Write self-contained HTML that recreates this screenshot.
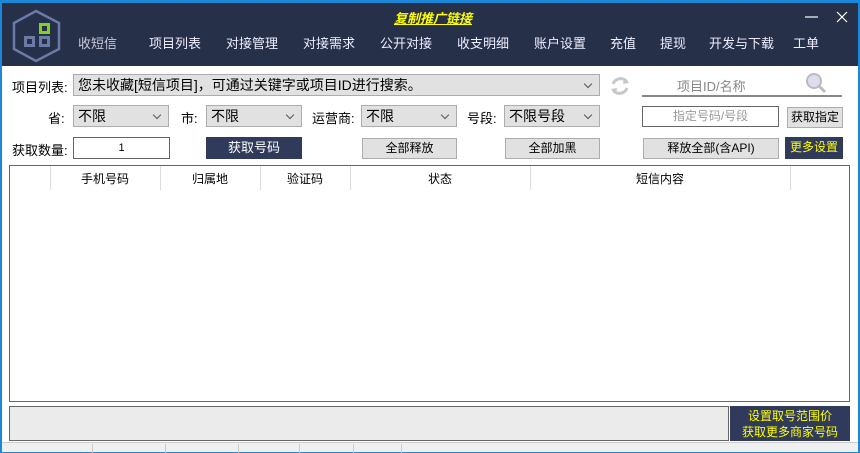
<!DOCTYPE html>
<html><head><meta charset="utf-8"><style>
*{margin:0;padding:0;box-sizing:border-box}
body{width:860px;height:452px;overflow:hidden;background:#1e88d8;font-family:"Liberation Sans","Noto Sans CJK SC",sans-serif;font-size:13px;color:#000;position:relative}
.win{position:absolute;left:2px;top:3px;width:856px;height:449px;background:#fff}
.hdr{position:absolute;left:0;top:0;width:856px;height:63px;background:#273049}
.a{position:absolute}
.nav{position:absolute;top:30px;color:#eef;font-size:13px}
.sel{position:absolute;height:22px;background:#e1e1e1;border:1px solid #adadad;font-size:14px;padding-left:4px;line-height:20px}
.sel:after{content:"";position:absolute;right:8px;top:6px;width:5px;height:5px;border-right:1px solid #555;border-bottom:1px solid #555;transform:rotate(45deg)}
.btn{position:absolute;height:21px;background:#e1e1e1;border:1px solid #adadad;text-align:center;line-height:19px;font-size:12px}
.dk{background:#303b5b;border-color:#303b5b;color:#fff}
.lbl{position:absolute;font-size:13px}
th{font-weight:normal}
.sb{position:absolute;top:1px;width:1px;height:9px;background:#ccc}
</style></head><body>
<div class="win">
<div class="hdr">
<svg class="a" style="left:0;top:0" width="70" height="63"><polygon points="34,8 57,20 57,46 34,58 12,46 12,20" fill="none" stroke="#6b7aa6" stroke-width="2.5"/><rect x="37" y="20" width="11" height="11" fill="#7ed321"/><rect x="40" y="23" width="5" height="5" fill="#273049"/><rect x="22" y="33" width="11" height="11" fill="#6b7aa6"/><rect x="25" y="36" width="5" height="5" fill="#273049"/><rect x="37" y="33" width="11" height="11" fill="#6b7aa6"/><rect x="40" y="36" width="5" height="5" fill="#273049"/></svg>
<div class="a" style="left:392px;top:5px;color:#ffff00;font-weight:bold;font-style:italic;font-size:13px;text-decoration:underline">复制推广链接</div>
<svg class="a" style="left:800px;top:6px" width="50" height="16"><line x1="3" y1="8" x2="16" y2="8" stroke="#fff" stroke-width="1.2"/><line x1="35" y1="3" x2="45" y2="13" stroke="#fff" stroke-width="1.2"/><line x1="45" y1="3" x2="35" y2="13" stroke="#fff" stroke-width="1.2"/></svg>
<div class="nav" style="left:76px;color:#c8c8d8">收短信</div>
<div class="nav" style="left:147px">项目列表</div>
<div class="nav" style="left:224px">对接管理</div>
<div class="nav" style="left:301px">对接需求</div>
<div class="nav" style="left:378px">公开对接</div>
<div class="nav" style="left:455px">收支明细</div>
<div class="nav" style="left:532px">账户设置</div>
<div class="nav" style="left:608px">充值</div>
<div class="nav" style="left:658px">提现</div>
<div class="nav" style="left:707px">开发与下载</div>
<div class="nav" style="left:791px">工单</div>
</div>
<div class="lbl" style="left:10px;top:74px">项目列表:</div>
<div class="sel" style="left:71px;top:71px;width:527px">您未收藏[短信项目]，可通过关键字或项目ID进行搜索。</div>
<svg class="a" style="left:606px;top:71px" width="24" height="24"><path d="M5 10 A8 8 0 0 1 19 8" fill="none" stroke="#c8c8c8" stroke-width="3"/><path d="M19 14 A8 8 0 0 1 5 16" fill="none" stroke="#c8c8c8" stroke-width="3"/><path d="M16 4 L21 9 L15 10Z M8 20 L3 15 L9 14Z" fill="#c8c8c8"/></svg>
<div class="a" style="left:675px;top:73px;color:#888;font-size:13px">项目ID/名称</div>
<svg class="a" style="left:802px;top:68px" width="24" height="24"><circle cx="10" cy="10" r="7" fill="#dde" stroke="#bbb" stroke-width="2"/><line x1="15" y1="15" x2="21" y2="21" stroke="#bbb" stroke-width="3"/></svg>
<div class="a" style="left:640px;top:92px;width:200px;height:2px;background:#888"></div>

<div class="lbl" style="left:46px;top:105px">省:</div>
<div class="sel" style="left:71px;top:102px;width:96px">不限</div>
<div class="lbl" style="left:179px;top:105px">市:</div>
<div class="sel" style="left:204px;top:102px;width:96px">不限</div>
<div class="lbl" style="left:310px;top:105px">运营商:</div>
<div class="sel" style="left:359px;top:102px;width:96px">不限</div>
<div class="lbl" style="left:465px;top:105px">号段:</div>
<div class="sel" style="left:502px;top:102px;width:96px">不限号段</div>
<div class="a" style="left:640px;top:103px;width:137px;height:21px;border:1px solid #666;color:#999;text-align:center;line-height:19px;font-size:12px">指定号码/号段</div>
<div class="btn" style="left:785px;top:104px;width:56px">获取指定</div>

<div class="lbl" style="left:10px;top:137px">获取数量:</div>
<div class="a" style="left:71px;top:134px;width:97px;height:22px;border:1px solid #666;text-align:center;line-height:20px;font-size:11px">1</div>
<div class="btn dk" style="left:204px;top:134px;width:96px;height:22px;font-size:13px">获取号码</div>
<div class="btn" style="left:360px;top:135px;width:95px">全部释放</div>
<div class="btn" style="left:503px;top:135px;width:95px">全部加黑</div>
<div class="btn" style="left:641px;top:135px;width:136px">释放全部(含API)</div>
<div class="btn dk" style="left:783px;top:134px;width:58px;height:22px;color:#ff0">更多设置</div>

<div class="a" style="left:7px;top:162px;width:841px;height:237px;border:1px solid #666;background:#fff">
<table style="border-collapse:collapse;font-size:12px;height:24px;position:absolute;left:0;top:0">
<tr><th style="width:40px;border-right:1px solid #ddd"></th><th style="width:110px;border-right:1px solid #ddd">手机号码</th><th style="width:100px;border-right:1px solid #ddd">归属地</th><th style="width:90px;border-right:1px solid #ddd">验证码</th><th style="width:180px;border-right:1px solid #ddd">状态</th><th style="width:260px;border-right:1px solid #ddd">短信内容</th><th style="width:59px"></th></tr></table>
</div>
<div class="a" style="left:7px;top:403px;width:720px;height:35px;border:1px solid #666;background:#ebebeb"></div>
<div class="a" style="left:728px;top:403px;width:120px;height:35px;background:#303b5b;color:#ff0;font-size:12px;text-align:center;line-height:16px;padding-top:2px">设置取号范围价<br>获取更多商家号码</div>
<div class="a" style="left:0;top:439px;width:856px;height:10px;background:#f0f0f0;border-top:1px solid #ccc">
<div class="sb" style="left:90px"></div><div class="sb" style="left:163px"></div><div class="sb" style="left:236px"></div><div class="sb" style="left:297px"></div><div class="sb" style="left:351px"></div><div class="sb" style="left:399px"></div>
</div>
</div>
</body></html>
